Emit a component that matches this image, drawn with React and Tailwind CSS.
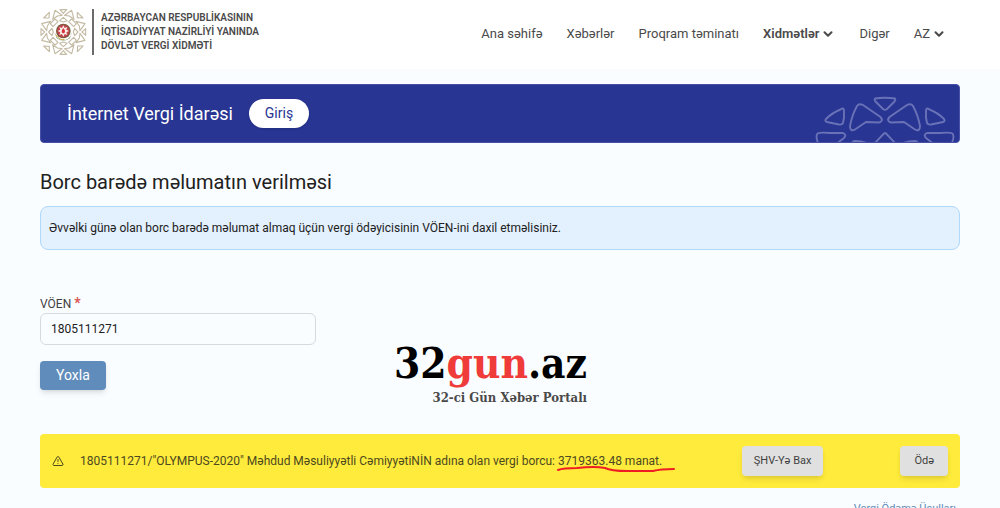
import React from "react";
import { ChevronDown, TriangleAlert } from "lucide-react";

const QUARTERS = [0, 90, 180, 270];

function Emblem() {
  return (
    <svg viewBox="-70 -72 144 144" className="size-12 shrink-0" role="img" aria-label="Dövlət Vergi Xidməti">
      <g fill="none" stroke="#c4bba4" strokeWidth="3.4" strokeLinejoin="round">
        {QUARTERS.map((angle) => (
          <g key={angle} transform={`rotate(${angle})`}>
            <path d="M-10-67H10L0-56Z" />
            <path d="M-25-65L-4-50L-18-48L-32-38Z" />
            <path d="M25-65L4-50L18-48L32-38Z" />
            <path d="M-42-59L-59-42L-43-42Z" />
            <path d="M0-44L11-34L0-30L-11-34Z" />
            <path d="M-25-39L-16-31L-31-16L-39-25Z" />
          </g>
        ))}
      </g>
      <circle r="27" fill="#ffffff" />
      <path d="M-25 0A25 25 0 0 0 25 0L20 18Q0 33-20 18Z" fill="#3f6a3a" />
      <circle cy="-3" r="22" fill="#7d5a3c" />
      <circle cy="-3" r="18" fill="#c8434f" />
      <path d="M0-20L4-12L12-15L9-7L17-3L9 1L12 9L4 6L0 14L-4 6L-12 9L-9 1L-17-3L-9-7L-12-15L-4-12Z" fill="#f7f3ea" />
      <path d="M0-12Q8-3 3 4H-3Q-8-3 0-12Z" fill="#d8323f" />
      <path d="M-23 8Q-12 25 4 23" fill="none" stroke="#c9a743" strokeWidth="3" />
    </svg>
  );
}

function BannerOrnament() {
  return (
    <svg viewBox="0 -1 140 48" className="h-12 w-[140px] shrink-0 self-end" aria-hidden="true">
      <g fill="none" stroke="#6a72b7" strokeWidth="1.9" strokeLinejoin="round">
        <path d="M60 3.500Q70 2 80 3.500Q81 5 79.500 6.500L72 14Q70 15.500 68 14L60.500 6.500Q59 5 60 3.500Z" />
        <path d="M42 11Q44 8 48 10L65.500 22Q69 26 64 27.500L51 27L40 34.500Q35 37 35 31Q37 20 42 11Z" />
        <path d="M98 11Q96 8 92 10L74.500 22Q71 26 76 27.500L89 27L100 34.500Q105 37 105 31Q103 20 98 11Z" />
        <path d="M25.500 14.500Q29 12 29 16Q29.500 23 28 28Q27 30 24 29.500L12 27Q9 26 11.500 23.500Q17 18 25.500 14.500Z" />
        <path d="M114.500 14.500Q111 12 111 16Q110.500 23 112 28Q113 30 116 29.500L128 27Q131 26 128.500 23.500Q123 18 114.500 14.500Z" />
        <path d="M4 50Q0 42 2.500 38.500Q5 37 15 38H28Q32 40 29 43L20 50" />
        <path d="M136 50Q140 42 137.500 38.500Q135 37 125 38H112Q108 40 111 43L120 50" />
        <path d="M58 50L69 38.500Q70 37.500 71 38.500L82 50" />
        <path d="M37 50Q37 46 40 46Q48 46 54 49M103 50Q103 46 100 46Q92 46 86 49" />
      </g>
    </svg>
  );
}

function Header() {
  return (
    <header className="flex items-center justify-between bg-white px-10 pt-2 pb-[13px] text-[#4a4a4a]">
      <a href="#" className="flex items-center gap-1">
        <Emblem />
        <span className="border-l-2 border-[#6b6b6b] py-[2px] pl-[7px] text-[10px] leading-[14px] font-semibold">
          AZƏRBAYCAN RESPUBLİKASININ
          <br />
          İQTİSADİYYAT NAZİRLİYİ YANINDA
          <br />
          DÖVLƏT VERGİ XİDMƏTİ
        </span>
      </a>
      <nav className="flex items-center gap-6 pt-1 pr-[14px] text-[13px] leading-5">
        <a href="#">Ana səhifə</a>
        <a href="#">Xəbərlər</a>
        <a href="#">Proqram təminatı</a>
        <button type="button" className="flex items-center gap-[2px] font-semibold">
          Xidmətlər <ChevronDown className="size-[14px]" strokeWidth={3.5} />
        </button>
        <a href="#">Digər</a>
        <button type="button" className="flex items-center gap-[2px]">
          AZ <ChevronDown className="size-[14px]" strokeWidth={3.5} />
        </button>
      </nav>
    </header>
  );
}

function DebtAlert() {
  return (
    <section role="alert" className="flex items-center rounded bg-[#ffeb3b] px-3 py-3 text-[12px] text-[#4d491f]">
      <TriangleAlert className="size-3 shrink-0" strokeWidth={2} />
      <p className="flex-1 pl-4">
        1805111271/"OLYMPUS-2020" Məhdud Məsuliyyətli CəmiyyətiNİN adına olan vergi borcu:{" "}
        <span className="relative inline-block">
          3719363.48 manat.
          <svg viewBox="0 0 118 6" className="absolute top-[14px] -left-px h-[6px] w-[118px]" aria-hidden="true">
            <path d="M1 4Q6 2 20 2Q38 0 48 2Q54 5 70 5H96Q104 3 117 3" fill="none" stroke="#ef1c24" strokeWidth="2" strokeLinecap="round" />
          </svg>
        </span>
      </p>
      <div className="flex gap-[77px]">
        <button type="button" className="h-[30px] rounded-sm bg-[#e0e0e0] px-3 text-[11px] text-[#3f3f3f] shadow-md">ŞHV-Yə Bax</button>
        <button type="button" className="h-[30px] rounded-sm bg-[#e0e0e0] px-[14px] text-[11px] text-[#3f3f3f] shadow-md">Ödə</button>
      </div>
    </section>
  );
}

export default function App() {
  return (
    <div className="min-h-screen bg-[#fafdff] font-['Roboto','Liberation_Sans',sans-serif] text-[#212121]">
      <Header />
      <main className="px-10 pt-[15px]">
        <section className="flex items-center overflow-hidden rounded border border-[#4750a5] bg-[#283593] pr-1 pl-[26px] text-white">
          <h2 className="text-[18px] leading-6">İnternet Vergi İdarəsi</h2>
          <a href="#" className="my-[14px] ml-4 rounded-full bg-white px-4 py-1 text-[14px] leading-[21px] text-[#283593] shadow">Giriş</a>
          <div className="flex flex-1 justify-end self-stretch">
            <BannerOrnament />
          </div>
        </section>

        <h1 className="mt-[23px] text-[20px] leading-8">Borc barədə məlumatın verilməsi</h1>
        <p className="mt-2 rounded-lg border border-[#afd8fb] bg-[#e3f0fe] px-2 py-3 text-[12px] leading-[18px]">
          Əvvəlki günə olan borc barədə məlumat almaq üçün vergi ödəyicisinin VÖEN-ini daxil etməlisiniz.
        </p>

        <div className="mt-11 flex items-end">
          <form className="w-[276px]" onSubmit={(e) => e.preventDefault()}>
            <label htmlFor="voen" className="block text-[12px] leading-[18px] text-[#3f3f3f]">
              VÖEN <span className="text-[14px] font-bold text-[#d9534f]">*</span>
            </label>
            <input
              id="voen"
              defaultValue="1805111271"
              className="block h-8 w-full rounded-md border border-[#d5dadd] bg-[#fafdff] px-[10px] text-[12px]"
            />
            <button type="submit" className="mt-4 h-[29px] rounded-sm bg-[#5f8cba] px-4 text-[14px] text-white shadow-md">Yoxla</button>
          </form>
          <div className="-mb-[22px] ml-[78px] text-right font-['DejaVu_Serif_Condensed','DejaVu_Serif',serif] font-bold">
            <p className="text-[42px] leading-10 text-black">
              32<span className="text-[#ef3b39]">gun</span>.az
            </p>
            <p className="text-[13px] leading-7 text-[#4a4a4a]">32-ci Gün Xəbər Portalı</p>
          </div>
        </div>

        <div className="mt-11">
          <DebtAlert />
        </div>
        <div className="mt-[11px] flex justify-end pr-1">
          <a href="#" className="text-[11px] leading-5 text-[#5f8cba]">Vergi Ödəmə Üsulları</a>
        </div>
      </main>
    </div>
  );
}
